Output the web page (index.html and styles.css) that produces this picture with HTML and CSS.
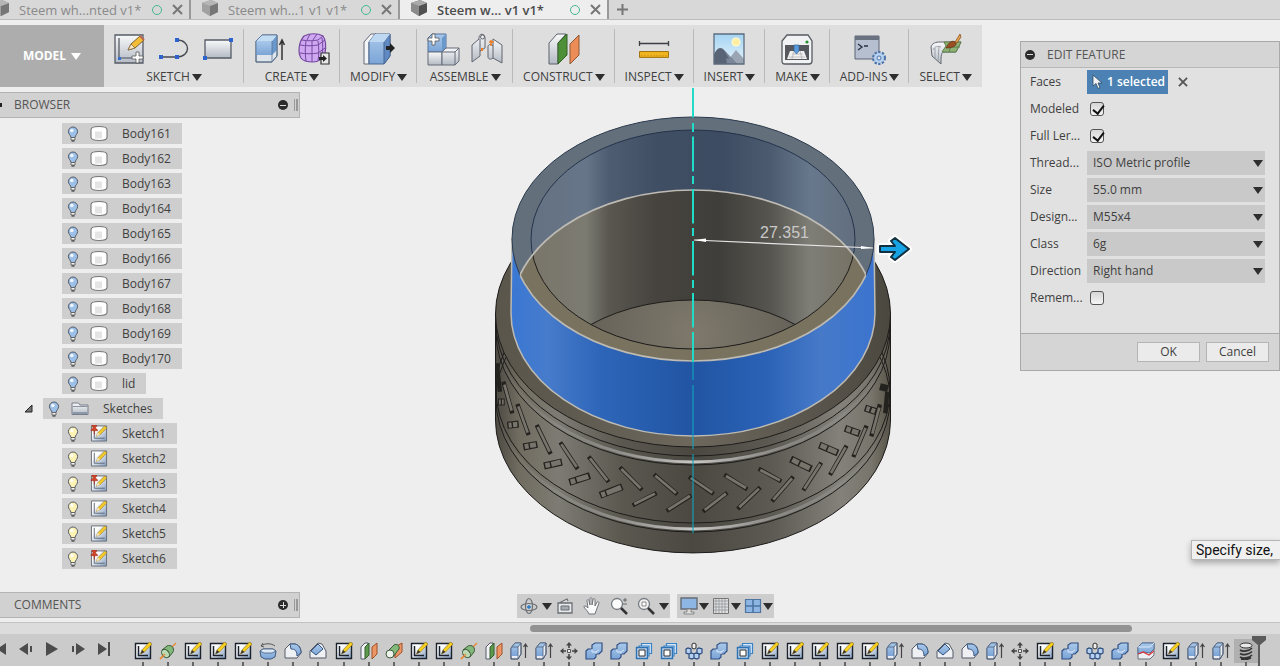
FILE: index.html
```html
<!DOCTYPE html>
<html lang="en">

<head>
    <meta charset="UTF-8">
    <meta name="viewport" content="width=device-width, initial-scale=1.0">
    <title>Steem wheel v1</title>
    <link rel="stylesheet" href="styles.css">
</head>

<body>
    <!-- shared icons -->
    <svg class="sprite" aria-hidden="true">
        <defs>
            <linearGradient id="gBlue" x1="0" y1="0" x2="0" y2="1">
                <stop offset="0" stop-color="#a9c9ea"/><stop offset="1" stop-color="#7ba4d6"/>
            </linearGradient>
            <linearGradient id="gGrey" x1="0" y1="0" x2="0" y2="1">
                <stop offset="0" stop-color="#f8f9fa"/><stop offset="1" stop-color="#b4bac4"/>
            </linearGradient>
            <linearGradient id="gSky" x1="0" y1="0" x2="0" y2="1">
                <stop offset="0" stop-color="#a5d4f2"/><stop offset="1" stop-color="#e4f3fa"/>
            </linearGradient>
            <linearGradient id="gSteel" x1="0" y1="0" x2="1" y2="1">
                <stop offset=".3" stop-color="#ffffff"/><stop offset="1" stop-color="#7f99bd"/>
            </linearGradient>
        </defs>
        <symbol id="cube" viewBox="0 0 18 16">
            <path d="M1 3L10 0l7 3v9l-8 4-8-5z" fill="#777"/><path d="M1 3l8 3v10l-8-5z" fill="#8b8b8b"/><path d="M9 6l8-3v9l-8 4z" fill="#4f4f4f"/><path d="M1 3L10 0l7 3-8 3z" fill="#a9a9a9"/>
        </symbol>
        <symbol id="bulb" viewBox="0 0 12 16">
            <path d="M6 1a4.600 4.600 0 0 1 4.600 4.600c0 2.400-2.300 3.600-2.600 5.900H4C3.700 9.200 1.400 8 1.400 5.600A4.600 4.600 0 0 1 6 1z" fill="currentColor" stroke="#555b66"/>
            <circle cx="4.800" cy="4.500" r="1.800" fill="#fff" opacity=".85"/><path d="M4 11.500h4V14H4z" fill="#f2f2f2" stroke="#555" stroke-width=".8"/><path d="M4.500 14.500h3v1h-3z" fill="#222"/>
        </symbol>
        <symbol id="cylinder" viewBox="0 0 18 16">
            <path d="M1 4c0-4 16-4 16 0v8c0 4-16 4-16 0z" fill="#fff" stroke="#777" stroke-width="1.100"/><path d="M5 6h7v7H5z" fill="#e4e4e4"/>
        </symbol>
        <symbol id="folder" viewBox="0 0 18 16">
            <path d="M1 14V2.500h6.500l1.500 2h8V14z" fill="url(#gGrey)" stroke="#777e8a"/><path d="M1.500 6h15" stroke="#8d94a0"/><path d="M2 12.500h14" stroke="#8d97ab" stroke-width="2"/>
        </symbol>
        <symbol id="sketch" viewBox="0 0 18 18">
            <path d="M1 1h16v16H1z" fill="url(#gSteel)" stroke="#666c78"/><path d="M4 3v11h11" fill="none" stroke="#5d6673"/>
            <path d="M6 12l2-4 7-7 2.500 2L10 10.500z" fill="#f3c92c" stroke="#8d7427" stroke-width=".6"/><path d="M6 12l2-4 2 2.500z" fill="#f6e8c8"/>
        </symbol>
        <symbol id="sketch-pin" viewBox="0 0 18 18">
            <use href="#sketch"/><path d="M1.500 0h5v1.500h-1v2l2 1.500v1H4.500l-.5 4-.5-4H.5V5l2-1.500v-2h-1z" fill="#d2452a" stroke="#8e2b18" stroke-width=".5"/>
        </symbol>
        <symbol id="t-sketch" viewBox="0 0 18 18">
            <path d="M1.500 1.500h15v15h-15z" fill="url(#gSteel)" stroke="#1c222c" stroke-width="1.400"/><path d="M4.500 4v9.500H14" fill="none" stroke="#1c222c" stroke-width="1.500"/>
            <path d="M6.500 12l1.500-4 7.500-8L18 2l-7.500 8z" fill="#f7cf1c" stroke="#8d7427" stroke-width=".6"/><path d="M6.500 12l1.500-4 2.500 2z" fill="#333"/>
        </symbol>
        <symbol id="t-axis" viewBox="0 0 18 18">
            <path d="M1 17L17 1" stroke="#e98a35" stroke-width="1.500"/><path d="M3 8l5-4c4-2 8 2 6 6l-4 5z" fill="#83b87b" stroke="#3d5a3a"/><ellipse cx="6.500" cy="11.500" rx="3.400" ry="4.600" transform="rotate(-40 6.500 11.500)" fill="#bcdab5" stroke="#3d5a3a"/><path d="M1 17l5-5" stroke="#e98a35" stroke-width="1.500"/>
        </symbol>
        <symbol id="t-revolve" viewBox="0 0 18 18">
            <path d="M2 4c4-3 10-3 14 0M2 4l2-3M2 4l3 1" fill="none" stroke="#555"/><path d="M1 9l3-2h10l3 2-1 6-4 2H6l-4-2z" fill="url(#gBlue)" stroke="#41597c"/><path d="M1 9l4 2h8l4-2-3-2H4z" fill="#dce9f7" stroke="#41597c" stroke-width=".8"/>
        </symbol>
        <symbol id="t-fillet" viewBox="0 0 18 18">
            <path d="M1 16V7l5-5h5c4 1 6 4 6 9l-4 5z" fill="#eef0f3" stroke="#555c68"/><path d="M6 2h5c4 1 6 4 6 9l-4 3c0-5-2-7-6-7z" fill="url(#gBlue)" stroke="#38547e"/>
        </symbol>
        <symbol id="t-chamfer" viewBox="0 0 18 18">
            <path d="M1 16V9l8-8 4 1 4 7v7z" fill="#eef0f3" stroke="#555c68"/><path d="M2 9l7-7 5 5-7 6z" fill="url(#gBlue)" stroke="#38547e"/>
        </symbol>
        <symbol id="t-plane" viewBox="0 0 18 18">
            <path d="M1 5l4-4h3v12l-3 4H1z" fill="#f2f3f5" stroke="#555c68"/><path d="M5 5l4-4v12l-4 4z" fill="#5b9b4b" stroke="#365c30"/><path d="M12 5l5-4v11l-5 5z" fill="#ec9665" stroke="#a0522a"/>
        </symbol>
        <symbol id="t-tangent" viewBox="0 0 18 18">
            <path d="M10 5l7-4v9l-7 6z" fill="#ec9665" stroke="#a0522a"/><path d="M2 10l7-7c3-2 6 1 5 4l-6 8z" fill="#83b87b" stroke="#3d5a3a"/><circle cx="5" cy="12" r="4" fill="#eef2ed" stroke="#3d5a3a"/>
        </symbol>
        <symbol id="t-extrude" viewBox="0 0 18 18">
            <path d="M1 6l4-5h6v11l-3 5H1z" fill="#e9edf3" stroke="#555c68"/><path d="M1 6l4-5h6L8 5v9H1z" fill="url(#gBlue)"/><path d="M1 6l4-5h6v11l-3 5H1zM8 17V5l3-4M8 5H2" fill="none" stroke="#4b5f7e" stroke-width=".8"/><path d="M15.500 16V2M13.500 5l2-3 2 3" fill="none" stroke="#444" stroke-width="1.200"/>
        </symbol>
        <symbol id="t-move" viewBox="0 0 18 18">
            <path d="M7.500 7.500h3v3h-3z" fill="#eee" stroke="#555"/><path d="M9 0l3 3.500H6zM9 18l3-3.500H6zM0 9l3.500-3v6zM18 9l-3.500-3v6z" fill="#444"/><path d="M9 3v3M9 12v3M3 9h3M12 9h3" stroke="#444" stroke-width="1.600"/>
        </symbol>
        <symbol id="t-combine" viewBox="0 0 18 18">
            <path d="M1 9l2-2h4V3l3-2h7v8l-3 3h-3v3l-2 2H1z" fill="url(#gBlue)" stroke="#2f4f83" stroke-width="1.200"/><path d="M7 7v3h4l3-2M11 12v-2" fill="none" stroke="#dbe8f8"/>
        </symbol>
        <symbol id="t-copy" viewBox="0 0 18 18">
            <path d="M6.500 1.500h10v10h-10z" fill="#d6e7f7" stroke="#3b82c4" stroke-width="1.200"/><path d="M4 4h10v10H4z" fill="#d6e7f7" stroke="#3b82c4" stroke-width="1.200"/><path d="M1.500 5.500h11v11h-11z" fill="#b7cfe8" stroke="#2d72b4" stroke-width="1.400"/><path d="M4 8h6v6H4z" fill="#fff" stroke="#333"/>
        </symbol>
        <symbol id="t-pattern" viewBox="0 0 18 18">
            <g fill="#b7d0ef" stroke="#294a7d" stroke-width="1.200"><path d="M1 7l2-1 3 1v4l-2 1-3-1zM12 7l2-1 3 1v4l-2 1-3-1zM4 12l2-1 3 1v4l-2 1-3-1zM9 12l2-1 3 1v4l-2 1-3-1z"/></g><path d="M7 2l2-1 2 1v4L9 7 7 6z" fill="#eee" stroke="#333"/>
        </symbol>
        <symbol id="t-split" viewBox="0 0 18 18">
            <path d="M1 5l4-4h12v12l-4 4H1z" fill="#eceef1" stroke="#666e7c"/><path d="M1 5l4-4h12v6l-4 4-6-1-6 2z" fill="url(#gBlue)" stroke="#53709b"/><path d="M1 5h12l4-4" fill="none" stroke="#dbe8f8"/><path d="M1 12l5-2 6 3 5-4" fill="none" stroke="#d33" stroke-width="1.200"/>
        </symbol>
        <symbol id="t-thread" viewBox="0 0 18 18">
            <ellipse cx="9" cy="3.500" rx="6" ry="2.500" fill="#e8e8e8" stroke="#333"/><path d="M3 8c3 2 9 1 12-2M3 11.500c3 2 9 1 12-2M3 15c3 2 9 1 12-2M4 17.500c4 .5 8-.5 10-2" fill="none" stroke="#333" stroke-width="1.700"/>
        </symbol>
    </svg>

    <nav class="tabs">
        <a class="tab" href="#"><svg class="tab-cube"><use href="#cube"/></svg><span class="tab-name">Steem wh...nted v1*</span><i class="dot"></i><svg class="cross" viewBox="0 0 11 11"><path d="M1 1l9 9M10 1l-9 9"/></svg></a>
        <a class="tab" href="#"><svg class="tab-cube"><use href="#cube"/></svg><span class="tab-name">Steem wh...1 v1 v1*</span><i class="dot"></i><svg class="cross" viewBox="0 0 11 11"><path d="M1 1l9 9M10 1l-9 9"/></svg></a>
        <a class="tab active" href="#"><svg class="tab-cube"><use href="#cube"/></svg><span class="tab-name">Steem w... v1 v1*</span><i class="dot"></i><svg class="cross" viewBox="0 0 11 11"><path d="M1 1l9 9M10 1l-9 9"/></svg></a>
        <button class="add-tab" aria-label="New tab"><svg class="cross" viewBox="0 0 11 11"><path d="M5.500 0v11M0 5.500h11"/></svg></button>
    </nav>

    <div class="work">
        <main class="left">
            <div class="toolbar">
                <button class="model">MODEL <i class="caret"></i></button>
                <button class="group">
                    <span class="icons">
                        <svg viewBox="0 0 32 32">
                            <path d="M1 2h28v28H1z" fill="url(#gGrey)" stroke="#565c66" stroke-width="1.300"/><path d="M5 5v20h14" fill="none" stroke="#4d535c" stroke-width="1.200"/><path d="M4 24h3v3H4z" fill="#2e6fd0"/>
                            <path d="M14 17l3-6L26 3l4 4-9 8z" fill="#f3bd35" stroke="#7d6030"/><path d="M14 17l3-6 4 4z" fill="#f7e6c6" stroke="#7d6030" stroke-width=".7"/><path d="M26 3l4 4" stroke="#ba654d" stroke-width="2"/>
                            <path d="M22 19h3v4h4v3h-4v4h-3v-4h-4v-3h4z" fill="#fff" stroke="#555" stroke-width=".8"/>
                        </svg>
                        <svg viewBox="0 0 32 32">
                            <path d="M3 24h16c14 0 14-17 0-17" fill="none" stroke="#454a52" stroke-width="1.400"/><path d="M1 22h4v4H1zM17 22h4v4h-4zM17 5h4v4h-4z" fill="#2c63cc"/>
                        </svg>
                        <svg viewBox="0 0 32 32">
                            <path d="M3 7h26v18H3z" fill="url(#gGrey)" stroke="#555b66" stroke-width="1.300"/><path d="M27 5h4v4h-4zM1 23h4v4H1z" fill="#2c63cc"/>
                        </svg>
                    </span>
                    <span class="name">SKETCH <i class="caret"></i></span>
                </button>
                <button class="group">
                    <span class="icons">
                        <svg viewBox="0 0 32 32">
                            <path d="M2 8l6-6h15v21l-5 6H2z" fill="#dfe3ea" stroke="#5b616d"/><path d="M2 8h16v14H2z" fill="url(#gBlue)"/><path d="M18 8l5-6v15l-5 5z" fill="#6b98cb"/><path d="M2 8l6-6h15l-5 6z" fill="#c2dcf3"/><path d="M18 8v21M2 8l6-6h15v21l-5 6H2z" fill="none" stroke="#54739a" stroke-width=".8"/>
                            <path d="M28 27V8M25.500 12l2.500-5 2.500 5" fill="none" stroke="#333" stroke-width="1.500"/>
                        </svg>
                        <svg viewBox="0 0 32 32">
                            <path d="M6 3C12 0 20 0 25 3c3 4 3 12 2 18-3 6-7 8-12 8-6 0-10-1-12-4C0 20 0 10 6 3z" fill="#cfa8f2" stroke="#74489f" stroke-width="1.200"/>
                            <path d="M2 12c6 1 12 1 18 0M2 20c6 1 12 1 18 0M8 8c-1 7-1 13 0 20M14 8v21M20 8c1 6 1 13 0 20M20 12l7-5M4 7c6 1 11 1 16 0l5-4M20 20l7-5M24 5c1 6 1 13 0 20M12 1L9 7M19 1l-4 6" fill="none" stroke="#74489f"/>
                            <path d="M23 20h8v11h-8z" fill="#e9e9e9" stroke="#333" stroke-width="1.200"/><path d="M21 24h4v-2l4 3.500-4 3.500v-2h-4z" fill="#222"/>
                        </svg>
                    </span>
                    <span class="name">CREATE <i class="caret"></i></span>
                </button>
                <button class="group">
                    <span class="icons">
                        <svg viewBox="0 0 32 32">
                            <path d="M1 9l7-8h5L6 9v22H1z" fill="#f4f5f7" stroke="#646b78"/><path d="M6 9l6-8h15v22l-6 8H6z" fill="url(#gBlue)" stroke="#4b6791"/><path d="M21 9l6-8v22l-6 8z" fill="#5f8ac4" stroke="#4b6791"/><path d="M6 9l6-8h15l-6 8z" fill="#bfd8f2"/>
                            <path d="M23 13h4v-3l5 5-5 5v-3h-4z" fill="#222"/>
                        </svg>
                    </span>
                    <span class="name">MODIFY <i class="caret"></i></span>
                </button>
                <button class="group">
                    <span class="icons">
                        <svg viewBox="0 0 32 32">
                            <path d="M1 5l4-4h14v14l-4 4H1z" fill="url(#gBlue)" stroke="#54739a"/><path d="M15 5l4-4v14l-4 4z" fill="#6b98cb"/><path d="M1 19h14v13H1z" fill="url(#gGrey)" stroke="#646b78"/><path d="M15 19l4-4h13v13l-4 4H15z" fill="url(#gGrey)" stroke="#646b78"/><path d="M15 19h13l4-4M28 19v13" fill="none" stroke="#646b78"/>
                            <path d="M5 1h3v4h4v3H8v4H5V8H1V5h4z" fill="#fff" stroke="#555" stroke-width=".8"/>
                        </svg>
                        <svg viewBox="0 0 32 32">
                            <path d="M1 12l7-6V5c0-5 6-5 6 0v10l-5 3v5l-8 6z" fill="url(#gGrey)" stroke="#60656e"/><path d="M9 6v12" fill="none" stroke="#60656e"/><circle cx="11.500" cy="4" r="2" fill="#eee" stroke="#60656e"/>
                            <path d="M11 15v3" stroke="#ef7d24" stroke-width="2"/><path d="M17 13c1-2 4-2 5 0V6l9 6v18l-9-5c-2 2-5 1-5-1z" fill="url(#gGrey)" stroke="#60656e"/><path d="M22 13v12" stroke="#60656e"/><path d="M20 7v6M18 9h5" stroke="#ef7d24" stroke-width="1.500"/>
                        </svg>
                    </span>
                    <span class="name">ASSEMBLE <i class="caret"></i></span>
                </button>
                <button class="group">
                    <span class="icons">
                        <svg viewBox="0 0 32 32">
                            <path d="M1 10l8-9h9l-8 9v21H1z" fill="url(#gGrey)" stroke="#5d626b"/><path d="M10 10l9-9v21l-9 9z" fill="#4d9038" stroke="#336026"/><path d="M22 11l9-9v20l-9 9z" fill="#ec8c56" stroke="#8f5836"/>
                        </svg>
                    </span>
                    <span class="name">CONSTRUCT <i class="caret"></i></span>
                </button>
                <button class="group">
                    <span class="icons">
                        <svg viewBox="0 0 32 32">
                            <path d="M1 10.500h30M1.500 8v5M30.500 8v5" stroke="#3c3f44" stroke-width="1.300"/><path d="M1.500 18.500h29v6h-29z" fill="#efb41e" stroke="#a27514"/><path d="M4 22v3M7 22v3M10 22v3M13 22v3M16 22v3M19 22v3M22 22v3M25 22v3M28 22v3" stroke="#c08c1a"/>
                        </svg>
                    </span>
                    <span class="name">INSPECT <i class="caret"></i></span>
                </button>
                <button class="group">
                    <span class="icons">
                        <svg viewBox="0 0 32 32">
                            <path d="M1 1h30v30H1z" fill="url(#gSky)"/><circle cx="23" cy="9" r="4.500" fill="#fff7c4"/><circle cx="23" cy="9" r="3" fill="#ffeda0"/><path d="M12 31l11-14 8 9v5z" fill="#9aa4b3"/><path d="M1 21c4-7 7-7 10-4l13 14H1z" fill="#5a6477"/><path d="M11 17l5 9-3-1 1 6h10z" fill="#7c879a"/><path d="M1 1h30v30H1z" fill="none" stroke="#5c6c7e" stroke-width="1.300"/>
                        </svg>
                    </span>
                    <span class="name">INSERT <i class="caret"></i></span>
                </button>
                <button class="group">
                    <span class="icons">
                        <svg viewBox="0 0 32 32">
                            <path d="M6 2h21l4 6v20c0 2-1 3-3 3H4c-2 0-3-1-3-3V8z" fill="#f1f2f3" stroke="#565b62" stroke-width="1.300"/><path d="M4 12h24v15H4z" fill="#55585d"/><path d="M9 18h14l3 8H6z" fill="#f0f0f0"/><path d="M11 21h11M8 24h16M13 18l-2 8M19 18l2 8" stroke="#b5b5b5" stroke-width=".8"/><path d="M13 12h5v6l-2.500 3-2.500-3z" fill="#5b9bdc" stroke="#2f619a" stroke-width=".7"/><circle cx="26" cy="9" r="1.600" fill="#26922b"/>
                        </svg>
                    </span>
                    <span class="name">MAKE <i class="caret"></i></span>
                </button>
                <button class="group">
                    <span class="icons">
                        <svg viewBox="0 0 32 32">
                            <path d="M1 3h24v23H1z" fill="#b6bfd0" stroke="#5c6474"/><path d="M1 3h24v4H1z" fill="#6a7282"/><path d="M4 11l4 3-4 3M10 13h4" fill="none" stroke="#2d3542" stroke-width="1.400"/>
                            <circle cx="25" cy="25" r="5.500" fill="#b6d0f0" stroke="#4d74a8" stroke-dasharray="2.200 1.300" stroke-width="3"/><circle cx="25" cy="25" r="5" fill="#b6d0f0"/><circle cx="25" cy="25" r="2" fill="#e4e8ee" stroke="#4d74a8"/>
                        </svg>
                    </span>
                    <span class="name">ADD-INS <i class="caret"></i></span>
                </button>
                <button class="group">
                    <span class="icons">
                        <svg viewBox="0 0 32 32">
                            <path d="M1 14c1-4 5-5 9-5h21l-5 10H15c-4 0-4 3-4 12l-9-8z" fill="url(#gGrey)" stroke="#646870"/><path d="M14 9h17l-5 10H12l4-6z" fill="#8eb276" stroke="#5f7f4c"/><path d="M17 14h13M22 9l-3 10" stroke="#5f7f4c"/><path d="M3 17c2-4 5-4 8-3M5 26V15M8 28l1-15" fill="none" stroke="#8d929c" stroke-width=".8"/>
                            <path d="M16 15c3-6 6-8 9-6s0 6-9 6z" fill="#9a4e22" stroke="#5f2e12" stroke-width=".7"/><path d="M25 9l5-8 1 3-4 6z" fill="#e9a04a" stroke="#7d4a20" stroke-width=".7"/>
                        </svg>
                    </span>
                    <span class="name">SELECT <i class="caret"></i></span>
                </button>
            </div>

            <div class="stage">
                <div class="side">
                    <header class="bar"><i class="nub"></i><h2>BROWSER</h2><button class="round" aria-label="Collapse"></button><i class="grip"></i></header>
                    <ul class="tree">
                        <li class="row"><svg class="bulb"><use href="#bulb"/></svg><svg class="kind"><use href="#cylinder"/></svg>Body161</li>
                        <li class="row"><svg class="bulb"><use href="#bulb"/></svg><svg class="kind"><use href="#cylinder"/></svg>Body162</li>
                        <li class="row"><svg class="bulb"><use href="#bulb"/></svg><svg class="kind"><use href="#cylinder"/></svg>Body163</li>
                        <li class="row"><svg class="bulb"><use href="#bulb"/></svg><svg class="kind"><use href="#cylinder"/></svg>Body164</li>
                        <li class="row"><svg class="bulb"><use href="#bulb"/></svg><svg class="kind"><use href="#cylinder"/></svg>Body165</li>
                        <li class="row"><svg class="bulb"><use href="#bulb"/></svg><svg class="kind"><use href="#cylinder"/></svg>Body166</li>
                        <li class="row"><svg class="bulb"><use href="#bulb"/></svg><svg class="kind"><use href="#cylinder"/></svg>Body167</li>
                        <li class="row"><svg class="bulb"><use href="#bulb"/></svg><svg class="kind"><use href="#cylinder"/></svg>Body168</li>
                        <li class="row"><svg class="bulb"><use href="#bulb"/></svg><svg class="kind"><use href="#cylinder"/></svg>Body169</li>
                        <li class="row"><svg class="bulb"><use href="#bulb"/></svg><svg class="kind"><use href="#cylinder"/></svg>Body170</li>
                        <li class="row"><svg class="bulb"><use href="#bulb"/></svg><svg class="kind"><use href="#cylinder"/></svg>lid</li>
                        <li class="parent"><svg class="open" viewBox="0 0 9 9"><path d="M1 8h7V1z" fill="#777" stroke="#222"/></svg><span class="row"><svg class="bulb"><use href="#bulb"/></svg><svg class="kind"><use href="#folder"/></svg>Sketches</span></li>
                        <li class="row lit"><svg class="bulb"><use href="#bulb"/></svg><svg class="kind"><use href="#sketch-pin"/></svg>Sketch1</li>
                        <li class="row lit"><svg class="bulb"><use href="#bulb"/></svg><svg class="kind"><use href="#sketch"/></svg>Sketch2</li>
                        <li class="row lit"><svg class="bulb"><use href="#bulb"/></svg><svg class="kind"><use href="#sketch-pin"/></svg>Sketch3</li>
                        <li class="row lit"><svg class="bulb"><use href="#bulb"/></svg><svg class="kind"><use href="#sketch"/></svg>Sketch4</li>
                        <li class="row lit"><svg class="bulb"><use href="#bulb"/></svg><svg class="kind"><use href="#sketch"/></svg>Sketch5</li>
                        <li class="row lit"><svg class="bulb"><use href="#bulb"/></svg><svg class="kind"><use href="#sketch-pin"/></svg>Sketch6</li>
                    </ul>
                    <header class="bar comments"><h2>COMMENTS</h2><button class="round plus" aria-label="Expand"></button><i class="grip"></i></header>
                </div>

                <div class="view">
                    <svg class="canvas" viewBox="300 88 720 500" preserveAspectRatio="xMidYMin meet">
                        <defs>
                            <linearGradient id="mBody" gradientUnits="userSpaceOnUse" x1="495" y1="0" x2="891" y2="0">
                                <stop offset="0" stop-color="#4b4841"/><stop offset=".06" stop-color="#706c60"/><stop offset=".16" stop-color="#7d7b73"/><stop offset=".32" stop-color="#5b5850"/><stop offset=".5" stop-color="#4b4842"/><stop offset=".7" stop-color="#5d5a53"/><stop offset=".87" stop-color="#83817a"/><stop offset=".95" stop-color="#78756c"/><stop offset="1" stop-color="#565247"/>
                            </linearGradient>
                            <linearGradient id="mFlange" gradientUnits="userSpaceOnUse" x1="495" y1="0" x2="891" y2="0">
                                <stop offset="0" stop-color="#5a564b"/><stop offset=".15" stop-color="#5d594e"/><stop offset=".5" stop-color="#6d675c"/><stop offset=".85" stop-color="#56524a"/><stop offset="1" stop-color="#4b483f"/>
                            </linearGradient>
                            <linearGradient id="mBlue" gradientUnits="userSpaceOnUse" x1="511" y1="0" x2="875" y2="0">
                                <stop offset="0" stop-color="#3a78d4"/><stop offset=".1" stop-color="#477bcb"/><stop offset=".25" stop-color="#2d65b8"/><stop offset=".5" stop-color="#2155a3"/><stop offset=".7" stop-color="#2b62b6"/><stop offset=".85" stop-color="#4679c8"/><stop offset="1" stop-color="#3b74cf"/>
                            </linearGradient>
                            <linearGradient id="mWall" gradientUnits="userSpaceOnUse" x1="531" y1="0" x2="855" y2="0">
                                <stop offset="0" stop-color="#79756a"/><stop offset=".17" stop-color="#7c7b72"/><stop offset=".24" stop-color="#595750"/><stop offset=".38" stop-color="#47443f"/><stop offset=".58" stop-color="#403e3a"/><stop offset=".74" stop-color="#56554f"/><stop offset=".86" stop-color="#7e7e77"/><stop offset="1" stop-color="#767164"/>
                            </linearGradient>
                            <radialGradient id="mFloor" gradientUnits="userSpaceOnUse" cx="693" cy="335" r="100">
                                <stop offset="0" stop-color="#7e796b"/><stop offset="1" stop-color="#67635a"/>
                            </radialGradient>
                            <linearGradient id="mShine" gradientUnits="userSpaceOnUse" x1="500" y1="0" x2="886" y2="0">
                                <stop offset="0" stop-color="#999" stop-opacity=".1"/><stop offset=".2" stop-color="#aaa" stop-opacity=".5"/><stop offset=".5" stop-color="#f2f2f2"/><stop offset=".8" stop-color="#aaa" stop-opacity=".5"/><stop offset="1" stop-color="#999" stop-opacity=".1"/>
                            </linearGradient>
                            <clipPath id="cTop"><ellipse cx="693" cy="239" rx="181" ry="122"/></clipPath>
                            <clipPath id="cBase"><ellipse cx="693" cy="313" rx="182" ry="123"/></clipPath>
                            <clipPath id="cInner"><ellipse cx="693" cy="239.500" rx="162" ry="109.500"/></clipPath>
                            <clipPath id="cBody"><path d="M495.500 314V420A197.500 133 0 0 0 890.500 420V314z"/></clipPath>
                        </defs>

                        <!-- wheel -->
                        <path d="M495.500 314V420A197.500 133 0 0 0 890.500 420V314z" fill="url(#mBody)" stroke="#1d1c1a"/>
                        <g clip-path="url(#cBody)" fill="none">
                            <ellipse cx="693" cy="329" rx="197" ry="133" stroke="url(#mShine)" stroke-width="3" opacity=".75"/>
                            <ellipse cx="693" cy="396" rx="197" ry="133" stroke="url(#mShine)" stroke-width="3" opacity=".75"/>
                            <g stroke="#1d1c1a">
                                <ellipse cx="693" cy="323" rx="197" ry="133"/>
                                <ellipse cx="693" cy="332" rx="197" ry="133"/>
                                <ellipse cx="693" cy="390" rx="197" ry="133"/>
                                <ellipse cx="693" cy="399" rx="197" ry="133"/>
                            </g>
                        </g>
                        <!-- tread grooves -->
                        <g clip-path="url(#cBody)">
                            <g transform="translate(480 320) scale(.3333)" fill="none">
                                <g stroke="#24221f" stroke-width="13">
                                    <path d="M50 130l10 85M70 185l27 95M112 252l34 93M170 315l42 87M241 367l52 80M326 410l60 76M420 442l66 68M522 463l70 60M627 470l74 52M733 464l69 44M836 446l68 38"/>
                                    <path d="M458 556l72-37M560 573l74-47M669 575l73-57M773 567l68-65M876 544l64-74M970 511l54-83M1050 465l50-88M1120 411l40-94M1174 349l26-96M1216 280l6-65"/>
                                    <path d="M932 417l62 30M1018 375l56 24M1095 325l44 16M1155 264l34 11M1200 200l24 6M54 246h20M82 316l34-4M130 381l42-8M192 438l54-12M268 487l62-20M360 526l67-26" stroke-width="21"/>
                                </g>
                                <g stroke="#77746b" stroke-width="8">
                                    <path d="M73 194l22 78M115 259l28 79M173 321l36 74M244 373l46 68M330 415l52 66M424 447l58 58M526 467l62 52M632 474l65 44M738 468l60 36M841 450l59 31"/>
                                    <path d="M463 552l62-31M565 569l65-41M674 570l64-49M778 562l59-56M880 539l56-64M973 506l48-74M1053 459l44-77M1123 404l34-80M1177 341l21-78"/>
                                    <path d="M937 419l19 10M960 431l29 14M1022 376l18 8M1044 386l26 11M1099 326l13 5M1116 333l19 6M1159 265l10 3M1174 270l11 4M57 246h5M66 246h5M86 316l9-1M99 314l13-1M134 380l12-2M150 377l18-3M196 437l14-3M214 433l28-7M272 486l14-4M290 480l35-11M364 525l12-4M380 519l43-17" stroke-width="15"/>
                                </g>
                            </g>
                        </g>
                        <ellipse cx="693" cy="314" rx="197.500" ry="133" fill="url(#mFlange)" stroke="#1d1c1a"/>

                        <!-- selected thread face -->
                        <path d="M512 239L511 313A182 123 0 0 0 875 313L874 239z" fill="url(#mBlue)" stroke="#bdbbb3" stroke-width="1.500"/>
                        <ellipse cx="693" cy="239" rx="181" ry="122" fill="#78725f"/>
                        <ellipse cx="693" cy="239.500" rx="162" ry="109.500" fill="url(#mWall)"/>
                        <g clip-path="url(#cInner)"><ellipse cx="693" cy="409.500" rx="162" ry="109.500" fill="url(#mFloor)" stroke="#1d1c1a"/></g>
                        <ellipse cx="693" cy="239.500" rx="162" ry="109.500" fill="none" stroke="#1d1c1a"/>
                        <ellipse cx="693" cy="239" rx="181" ry="122" fill="none" stroke="#2a3038"/>
                        <g clip-path="url(#cTop)">
                            <path d="M500 100h386v340H500zM511 313A182 123 0 0 0 875 313A182 123 0 0 0 511 313z" fill="#366abc" fill-opacity=".3" fill-rule="evenodd"/>
                            <ellipse cx="693" cy="313" rx="182" ry="123" fill="none" stroke="#bdbbb3" stroke-width="1.700"/>
                        </g>
                        <g clip-path="url(#cBase)"><ellipse cx="693" cy="239" rx="181" ry="122" fill="none" stroke="#bdbbb3" stroke-width="1.700"/></g>

                        <!-- axis -->
                        <path d="M693 88v29.500M693 123v9M693 136.500v35M693 176v8M693 189v34.500M693 228v8M693 241v34.500M693 280v8M693 293v34.500M693 332v30" stroke="#1fdcc8" stroke-width="2"/>
                        <path d="M693 362v18M693 385v64M693 454v79" stroke="#10a5c0" stroke-width="2" opacity=".55"/>

                        <!-- radius dimension -->
                        <path d="M694 240L873 248" stroke="#e6e6e6" stroke-width="1.200"/>
                        <path d="M694 240l12-1.500v3.500zM873 248l-12-2v3z" fill="#fff"/>
                        <text x="760" y="238" class="dimension">27.351</text>
                        <path d="M880 246h15l-4-5 4-3 14 11-14 11-4-3 4-5h-15z" fill="none" stroke="#fff" stroke-width="6" stroke-linejoin="round"/>
                        <path d="M880 246h15l-4-5 4-3 14 11-14 11-4-3 4-5h-15z" fill="#18a3e4" stroke="#12303f" stroke-width="2" stroke-linejoin="round"/>
                    </svg>

                    <div class="navbars">
                        <div class="navbar">
                            <button aria-label="Orbit"><svg viewBox="0 0 18 18"><ellipse cx="9" cy="10" rx="8" ry="3.500" fill="none" stroke="#6b7075" stroke-width="1.200"/><ellipse cx="9" cy="9" rx="3.500" ry="7.500" fill="none" stroke="#6b7075" stroke-width="1.200"/><path d="M9 8v4M7 10h4" stroke="#2377c4" stroke-width="1.300"/></svg></button><i class="caret"></i>
                            <button aria-label="Look at"><svg viewBox="0 0 18 18"><path d="M3 6l8-4 1 2M2 6h14v10H2z" fill="#e5e7e9" stroke="#6b7075" stroke-width="1.300"/><path d="M5 9h8v4H5z" fill="#a5abb2" stroke="#6b7075"/></svg></button>
                            <button aria-label="Pan"><svg viewBox="0 0 18 18"><path d="M6 17c-1-3-4-5-5-7 0-2 2-1 4 1L4 4c0-2 2-2 2 0l1 4V2c0-2 2-2 2 0v6l1-5c0-2 2-2 2 0l0 6 2-4c1-1 2 0 2 1l-3 8-1 3z" fill="#fafafa" stroke="#70757a"/></svg></button>
                            <button aria-label="Zoom"><svg viewBox="0 0 18 18"><circle cx="7" cy="7" r="5.500" fill="#fbfbfb" stroke="#777c82" stroke-width="1.300"/><path d="M11 11l6 6" stroke="#333" stroke-width="2.500"/><path d="M15 1v4M13 3h4M13 7h4" stroke="#666"/></svg></button>
                            <button aria-label="Fit"><svg viewBox="0 0 18 18"><circle cx="7" cy="7" r="5.500" fill="#f2f2f2" stroke="#777c82" stroke-width="1.300"/><path d="M5 5h4v4H5z" fill="#fff" stroke="#888"/><path d="M11 11l6 6" stroke="#333" stroke-width="2.500"/></svg></button><i class="caret"></i>
                        </div>
                        <div class="navbar tight">
                            <button aria-label="Display"><svg viewBox="0 0 18 18"><path d="M1 1h16v11H1z" fill="#8db6e4" stroke="#666d75" stroke-width="1.400"/><path d="M7 12h4v3h3v2H4v-2h3z" fill="#ddd" stroke="#777" stroke-width=".8"/></svg></button><i class="caret"></i>
                            <button aria-label="Grid"><svg viewBox="0 0 18 18"><path d="M1.500 1.500h15v15h-15z" fill="#e2e2e2" stroke="#777"/><path d="M4 2v14M7 2v14M10 2v14M13 2v14M2 4h14M2 7h14M2 10h14M2 13h14" stroke="#9b9fa4"/></svg></button><i class="caret"></i>
                            <button aria-label="Viewports"><svg viewBox="0 0 18 18"><path d="M1.500 2.500h15v13h-15z" fill="#8db6e4" stroke="#4e749f" stroke-width="1.200"/><path d="M9 2v14M1 9h16" stroke="#4e749f" stroke-width="1.600"/></svg></button><i class="caret"></i>
                        </div>
                    </div>
                </div>
            </div>
        </main>

        <form class="dialog">
            <header class="dialog-head"><button type="button" class="round" aria-label="Collapse"></button><h2>EDIT FEATURE</h2></header>
            <div class="fields">
                <span class="label">Faces</span>
                <div class="pick">
                    <button type="button" class="selected"><svg viewBox="0 0 10 16"><path d="M1 1v11l3-2.500 2 5 2-1-2-4.500h4z" fill="#f2f2f2" stroke="#2b4a66" stroke-width=".8"/></svg>1 selected</button>
                    <button type="button" class="clear" aria-label="Clear"><svg class="cross" viewBox="0 0 11 11"><path d="M1 1l9 9M10 1l-9 9"/></svg></button>
                </div>
                <label for="modeled">Modeled</label>
                <input type="checkbox" id="modeled" checked>
                <label for="full">Full Ler...</label>
                <input type="checkbox" id="full" checked>
                <label for="thread">Thread...</label>
                <div class="select"><select id="thread"><option>ISO Metric profile</option></select></div>
                <label for="size">Size</label>
                <div class="select"><select id="size"><option>55.0 mm</option></select></div>
                <label for="designation">Design...</label>
                <div class="select"><select id="designation"><option>M55x4</option></select></div>
                <label for="class">Class</label>
                <div class="select"><select id="class"><option>6g</option></select></div>
                <label for="direction">Direction</label>
                <div class="select"><select id="direction"><option>Right hand</option></select></div>
                <label for="remember">Remem...</label>
                <input type="checkbox" id="remember">
            </div>
            <footer class="actions"><button type="button">OK</button><button type="button">Cancel</button></footer>
        </form>
    </div>

    <div class="tip">Specify size,</div>

    <footer class="timeline">
        <div class="track"><div class="thumb"></div></div>
        <div class="steps">
            <div class="player">
                <button aria-label="Start"><svg viewBox="0 0 14 14"><path d="M13 1v12L4 7zM1 1h2v12H1z"/></svg></button>
                <button aria-label="Back"><svg viewBox="0 0 14 14"><path d="M9 1v12L0 7zM11 4h2v6h-2z"/></svg></button>
                <button aria-label="Play"><svg viewBox="0 0 14 14"><path d="M1 0v14l12-7z"/></svg></button>
                <button aria-label="Forward"><svg viewBox="0 0 14 14"><path d="M5 1v12l9-6zM1 4h2v6H1z"/></svg></button>
                <button aria-label="End"><svg viewBox="0 0 14 14"><path d="M1 1v12l9-6zM11 0h2v14h-2z"/></svg></button>
            </div>
            <ul class="history">
                <li><svg><use href="#t-sketch"/></svg></li>
                <li><svg><use href="#t-axis"/></svg></li>
                <li><svg><use href="#t-sketch"/></svg></li>
                <li><svg><use href="#t-sketch"/></svg></li>
                <li><svg><use href="#t-sketch"/></svg></li>
                <li><svg><use href="#t-revolve"/></svg></li>
                <li><svg><use href="#t-fillet"/></svg></li>
                <li><svg><use href="#t-chamfer"/></svg></li>
                <li><svg><use href="#t-sketch"/></svg></li>
                <li><svg><use href="#t-plane"/></svg></li>
                <li><svg><use href="#t-tangent"/></svg></li>
                <li><svg><use href="#t-sketch"/></svg></li>
                <li><svg><use href="#t-sketch"/></svg></li>
                <li><svg><use href="#t-axis"/></svg></li>
                <li><svg><use href="#t-plane"/></svg></li>
                <li><svg><use href="#t-extrude"/></svg></li>
                <li><svg><use href="#t-extrude"/></svg></li>
                <li><svg><use href="#t-move"/></svg></li>
                <li><svg><use href="#t-combine"/></svg></li>
                <li><svg><use href="#t-combine"/></svg></li>
                <li><svg><use href="#t-copy"/></svg></li>
                <li><svg><use href="#t-copy"/></svg></li>
                <li><svg><use href="#t-pattern"/></svg></li>
                <li><svg><use href="#t-combine"/></svg></li>
                <li><svg><use href="#t-copy"/></svg></li>
                <li><svg><use href="#t-sketch"/></svg></li>
                <li><svg><use href="#t-sketch"/></svg></li>
                <li><svg><use href="#t-sketch"/></svg></li>
                <li><svg><use href="#t-sketch"/></svg></li>
                <li><svg><use href="#t-sketch"/></svg></li>
                <li><svg><use href="#t-extrude"/></svg></li>
                <li><svg><use href="#t-fillet"/></svg></li>
                <li><svg><use href="#t-chamfer"/></svg></li>
                <li><svg><use href="#t-fillet"/></svg></li>
                <li><svg><use href="#t-extrude"/></svg></li>
                <li><svg><use href="#t-move"/></svg></li>
                <li><svg><use href="#t-sketch"/></svg></li>
                <li><svg><use href="#t-combine"/></svg></li>
                <li><svg><use href="#t-pattern"/></svg></li>
                <li><svg><use href="#t-combine"/></svg></li>
                <li><svg><use href="#t-split"/></svg></li>
                <li><svg><use href="#t-sketch"/></svg></li>
                <li><svg><use href="#t-extrude"/></svg></li>
                <li><svg><use href="#t-extrude"/></svg></li>
                <li class="current"><svg><use href="#t-thread"/></svg><svg class="marker" viewBox="0 0 14 30"><path d="M0 0h14v4L8 9v21H6V9L0 4z" fill="#5b5b5b"/></svg></li>
            </ul>
        </div>
    </footer>
</body>

</html>
```
FILE: styles.css
```css
* {
    box-sizing: border-box;
}

body {
    margin: 0;
    min-height: 100vh;
    display: flex;
    flex-direction: column;
    position: relative;
    overflow: hidden;
    background: #eeeeee;
    color: #3f3f3f;
    font-family: "Open Sans", "Noto Sans", sans-serif;
    font-size: 12px;
    line-height: 16px;
}

button {
    font: inherit;
    color: inherit;
    background: none;
    border: none;
    padding: 0;
}

h2 {
    margin: 0;
    font-size: 12px;
    font-weight: normal;
    color: #555;
}

ul {
    list-style: none;
    margin: 0;
    padding: 0;
}

svg {
    display: block;
    flex: none;
    overflow: visible;
}

.sprite {
    position: absolute;
    width: 0;
    height: 0;
}

.caret {
    flex: none;
    border: 5px solid transparent;
    border-top: 7px solid #2e2e2e;
    border-bottom: none;
}

.cross {
    width: 11px;
    height: 11px;
    fill: none;
    stroke: #777;
    stroke-width: 2;
}

/* document tabs */
.tabs {
    display: flex;
    height: 20px;
    margin-bottom: 5px;
    background: #d8d8d8;
    border-bottom: 1px solid #bbb;
}

.tab {
    width: 209px;
    display: flex;
    align-items: center;
    padding: 0 6px 0 10px;
    border-right: 2px solid #999;
    color: #8a8a8a;
    font-size: 13px;
    text-decoration: none;
}

.tab:first-child {
    margin-left: -18px;
}

.tab.active {
    background: #eeeeee;
    color: #4c4c4c;
    font-weight: 600;
}

.tab-cube {
    width: 18px;
    height: 16px;
    margin: 0 9px 3px 0;
    opacity: .7;
}

.active .tab-cube {
    opacity: 1;
}

.tab-name {
    flex: 1;
    white-space: nowrap;
}

.dot {
    width: 10px;
    height: 10px;
    margin-right: 10px;
    border: 1px solid #45b890;
    border-radius: 50%;
}

.add-tab {
    padding: 0 8px;
}

/* layout */
.work {
    flex: 1;
    display: flex;
    align-items: flex-start;
}

.left {
    flex: 1;
    align-self: stretch;
    display: flex;
    flex-direction: column;
}

.stage {
    flex: 1;
    display: flex;
    margin-top: 1px;
}

/* toolbar */
.toolbar {
    display: flex;
    align-self: flex-start;
    height: 62px;
    background: #dedede;
}

.model {
    width: 104px;
    display: flex;
    align-items: center;
    justify-content: center;
    gap: 5px;
    background: #adadad;
    color: #fff;
    font-weight: bold;
}

.model .caret {
    border-top-color: #fff;
}

.group {
    position: relative;
    display: flex;
    flex-direction: column;
    align-items: center;
    gap: 4px;
    padding: 8px 10px 0;
}

.group:not(:last-child)::after {
    content: "";
    position: absolute;
    right: 0;
    top: 4px;
    bottom: 4px;
    border-right: 1px solid #bababa;
}

.icons {
    display: flex;
    gap: 12px;
}

.icons svg {
    width: 32px;
    height: 32px;
}

.name {
    display: flex;
    align-items: center;
    gap: 2px;
}

/* browser */
.side {
    width: 300px;
    display: flex;
    flex-direction: column;
}

.bar {
    display: flex;
    align-items: center;
    height: 26px;
    margin-top: 4px;
    background: #d1d1d1;
    border: 1px solid #b3b3b3;
    border-left: none;
}

.bar h2 {
    flex: 1;
    margin-left: 14px;
}

.nub {
    width: 2px;
    height: 4px;
    margin-right: -2px;
    background: #222;
}

.grip {
    width: 4px;
    height: 12px;
    margin: 0 1px 0 6px;
    border: solid #999;
    border-width: 0 2px 0 1px;
}

.round {
    width: 10px;
    height: 10px;
    display: grid;
    place-items: center;
    border-radius: 50%;
    background: #2c2c2c;
}

.round::before,
.round.plus::after {
    content: "";
    grid-area: 1 / 1;
    width: 6px;
    height: 1px;
    background: #ddd;
}

.round.plus::after {
    width: 1px;
    height: 6px;
}

.tree {
    display: flex;
    flex-direction: column;
    align-items: flex-start;
    gap: 4px;
    padding: 5px 0 0 62px;
}

.row {
    display: flex;
    align-items: center;
    height: 21px;
    padding: 0 11px 0 5px;
    background: #cecece;
}

.bulb {
    width: 12px;
    height: 16px;
    margin-right: 11px;
    color: #9cc0e8;
}

.lit .bulb {
    color: #fdf3b4;
}

.kind {
    width: 18px;
    height: 17px;
    margin-right: 14px;
}

.parent {
    display: flex;
    align-items: center;
    gap: 10px;
    margin-left: -38px;
}

.open {
    width: 9px;
    height: 9px;
}

.comments {
    margin: auto 0 4px;
}

/* model view */
.view {
    flex: 1;
    display: flex;
    flex-direction: column;
}

.canvas {
    flex: 1;
    width: 100%;
    min-height: 0;
}

.dimension {
    font-family: "Liberation Sans", Arial, sans-serif;
    font-size: 16px;
    fill: #c9c9c9;
}

.navbars {
    display: flex;
    justify-content: center;
    gap: 7px;
    padding: 0 29px 4px 0;
}

.navbar {
    display: flex;
    align-items: center;
    gap: 9px;
    height: 24px;
    padding: 0 1px 0 3px;
    background: #cdcdcd;
}

.navbar svg {
    width: 18px;
    height: 18px;
}

.navbar button + .caret {
    margin-left: -5px;
}

.navbar .caret + button {
    margin-left: -5px;
}

.tight .caret + button {
    margin-left: -6px;
}

.tight button + .caret {
    margin-left: -8px;
}

/* edit dialog */
.dialog {
    width: 260px;
    margin-top: 16px;
    background: #e1e1e1;
    border: 1px solid #a9a9a9;
}

.dialog-head {
    display: flex;
    align-items: center;
    gap: 12px;
    height: 26px;
    padding-left: 4px;
    background: #d5d5d5;
    border-bottom: 1px solid #b8b8b8;
}

.fields {
    display: grid;
    grid-template-columns: 57px 1fr;
    grid-auto-rows: 24px;
    row-gap: 3px;
    align-items: center;
    padding: 2px 14px 23px 9px;
    white-space: nowrap;
}

.pick {
    display: flex;
    align-items: center;
    gap: 10px;
}

.selected {
    display: flex;
    align-items: center;
    gap: 5px;
    height: 24px;
    padding: 0 3px 0 5px;
    background: #4c82b3;
    color: #fff;
    font-weight: 600;
}

.selected svg {
    width: 10px;
    height: 16px;
}

.clear .cross {
    stroke: #555;
    width: 10px;
    height: 10px;
}

.fields input {
    appearance: none;
    width: 14px;
    height: 14px;
    margin: 0 0 0 3px;
    border: 1px solid #555;
    border-radius: 3px;
    background: linear-gradient(#d6d6d6, #f5f5f5);
}

.fields input:checked::before {
    content: "";
    display: block;
    width: 5px;
    height: 9px;
    margin: 0 0 0 4px;
    border: solid #111;
    border-width: 0 2px 2px 0;
    transform: rotate(38deg);
}

.select {
    display: grid;
    align-items: center;
    background: #c9c9c9;
}

.select select {
    grid-area: 1 / 1;
    appearance: none;
    height: 24px;
    padding: 0 20px 0 6px;
    font: inherit;
    color: inherit;
    background: none;
    border: none;
    border-radius: 0;
}

.select::after {
    content: "";
    grid-area: 1 / 1;
    justify-self: end;
    margin-right: 2px;
    border: 5px solid transparent;
    border-top: 7px solid #2e2e2e;
    border-bottom: none;
    pointer-events: none;
}

.actions {
    display: flex;
    justify-content: flex-end;
    gap: 6px;
    padding: 8px 10px;
    background: #d5d5d5;
    border-top: 1px solid #a9a9a9;
}

.actions button {
    width: 63px;
    height: 20px;
    background: #ebebeb;
    border: 1px solid #b5b5b5;
}

.tip {
    position: absolute;
    right: 0;
    bottom: 106px;
    width: 89px;
    padding: 1px 0 1px 4px;
    background: #f0f0f0;
    border: 1px solid #b5b5b5;
    border-right: none;
    box-shadow: 0 3px 6px rgba(0, 0, 0, .3);
    color: #111;
    font-family: Roboto, "Liberation Sans", sans-serif;
    font-size: 14px;
    white-space: nowrap;
}

/* timeline */
.timeline {
    background: #cbcbcb;
    border-top: 1px solid #c2c2c2;
}

.track {
    height: 11px;
    padding: 2px 0;
    background: #dcdcdc;
}

.thumb {
    width: 47%;
    height: 7px;
    margin-left: 41.4%;
    border-radius: 4px;
    background: #929292;
}

.steps {
    display: flex;
    height: 32px;
    padding-right: 25px;
}

.player {
    display: flex;
    align-items: center;
    margin: 0 17px 2px -13px;
}

.player button {
    width: 26px;
    display: grid;
    place-items: center;
}

.player svg {
    width: 14px;
    height: 14px;
    fill: #4c4c4c;
}

.history {
    flex: 1;
    display: flex;
    justify-content: space-between;
}

.history li {
    position: relative;
    padding-top: 8px;
}

.history svg {
    width: 18px;
    height: 18px;
}

.history li::after {
    content: "";
    display: block;
    width: 2px;
    height: 4px;
    margin: 2px auto 0;
    background: #666;
}

.history .current {
    background: linear-gradient(#b0b0b0, #b0b0b0) center 5px / 100% 24px no-repeat;
    margin: 0 -3px;
    padding: 8px 3px 0;
}

.history .marker {
    position: absolute;
    top: 2px;
    right: -8px;
    width: 14px;
    height: 30px;
}
```
